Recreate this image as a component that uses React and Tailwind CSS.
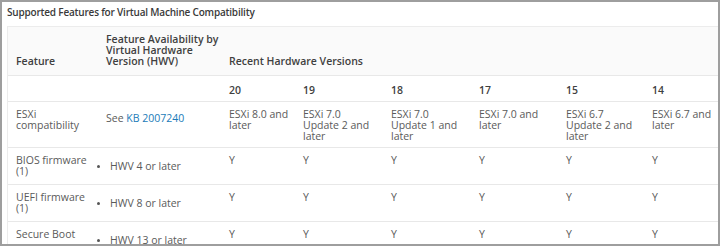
import React from "react";

const cols = "grid grid-cols-[90px_123px_74px_88px_88px_87px_86px_1fr]";
const cell = "pl-2 pr-1";
const font = { fontFamily: '"Open Sans", "Liberation Sans", sans-serif' };

const versions = ["20", "19", "18", "17", "15", "14"];
const esxi = [
  ["ESXi 8.0 and", "later"],
  ["ESXi 7.0", "Update 2 and", "later"],
  ["ESXi 7.0", "Update 1 and", "later"],
  ["ESXi 7.0 and", "later"],
  ["ESXi 6.7", "Update 2 and", "later"],
  ["ESXi 6.7 and", "later"],
];

function Lines({ lines }) {
  return lines.map((l, i) => (
    <React.Fragment key={i}>
      {l}
      {i < lines.length - 1 && <br />}
    </React.Fragment>
  ));
}

function FeatureRow({ name, hwv, h }) {
  return (
    <div className={`${cols} border-t border-[#e8e8e8] ${h}`}>
      <div className={`${cell} pt-[7px] whitespace-nowrap`}>
        <Lines lines={name} />
      </div>
      <div className={`${cell} pt-[13px]`}>
        <ul className="list-disc pl-[4px] marker:text-[#565656] marker:text-[8px]">
          <li>{hwv}</li>
        </ul>
      </div>
      {versions.map((v) => (
        <div key={v} className={`${cell} pt-[7px]`}>
          Y
        </div>
      ))}
      <div />
    </div>
  );
}

export default function App() {
  return (
    <div
      className="w-[720px] h-[246px] overflow-hidden border-2 border-[#9e9e9e] bg-white text-[10.5px] leading-[11px] text-[#5a5a5a]"
      style={font}
    >
      <div className="pl-[5px] pt-[4px] h-[24px] text-[10px] tracking-[-0.2px] leading-[12px] font-semibold text-[#3a3a3a] whitespace-nowrap">
        Supported Features for Virtual Machine Compatibility
      </div>
      <div className="ml-[5px] border-l border-t border-[#ececec]">
        <div className={`${cols} bg-[#fafafa] h-[48px] items-end pb-[2px] font-semibold text-[#3f3f3f]`}>
          <div className={cell}>Feature</div>
          <div className={`${cell} whitespace-nowrap`}>
            Feature Availability by
            <br />
            Virtual Hardware
            <br />
            Version (HWV)
          </div>
          <div className={`${cell} col-span-6 whitespace-nowrap`}>Recent Hardware Versions</div>
          <div />
        </div>
        <div className={`${cols} border-t border-[#e8e8e8] h-[26px] pt-[9px] font-semibold text-[#3f3f3f]`}>
          <div />
          <div />
          {versions.map((v) => (
            <div key={v} className={cell}>
              {v}
            </div>
          ))}
          <div />
        </div>
        <div className={`${cols} border-t border-[#e8e8e8] h-[46px]`}>
          <div className={`${cell} pt-[7px]`}>
            ESXi
            <br />
            compatibility
          </div>
          <div className={`${cell} pt-[11px]`}>
            See <span className="text-[#1a7bb8]">KB 2007240</span>
          </div>
          {esxi.map((l, i) => (
            <div key={i} className={`${cell} pt-[7px] whitespace-nowrap`}>
              <Lines lines={l} />
            </div>
          ))}
          <div />
        </div>
        <FeatureRow name={["BIOS firmware", "(1)"]} hwv="HWV 4 or later" h="h-[37px]" />
        <FeatureRow name={["UEFI firmware", "(1)"]} hwv="HWV 8 or later" h="h-[37px]" />
        <FeatureRow name={["Secure Boot"]} hwv="HWV 13 or later" h="h-[37px]" />
      </div>
    </div>
  );
}
